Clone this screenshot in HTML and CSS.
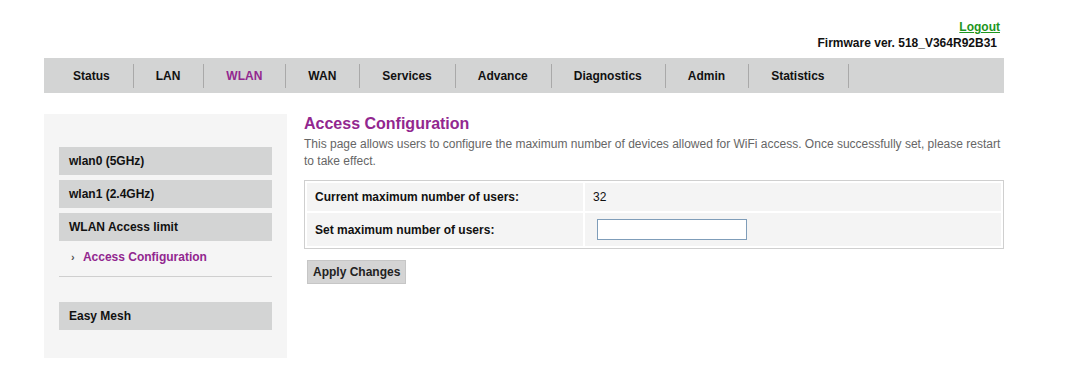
FILE: index.html
```html
<!DOCTYPE html>
<html>
<head>
    <title>WLAN Access Configuration</title>
    <link rel="stylesheet" href="styles.css">
</head>
<body>

<div class="page">
    <div class="top">
        <a class="logout" href="#">Logout</a>
        <div class="firmware">Firmware ver. 518_V364R92B31</div>
    </div>

    <ul class="nav">
        <li>Status</li>
        <li>LAN</li>
        <li class="active">WLAN</li>
        <li>WAN</li>
        <li>Services</li>
        <li>Advance</li>
        <li>Diagnostics</li>
        <li>Admin</li>
        <li>Statistics</li>
    </ul>

    <div class="main">
        <div class="side">
            <div class="menu-item">wlan0 (5GHz)</div>
            <div class="menu-item">wlan1 (2.4GHz)</div>
            <div class="menu-item open">WLAN Access limit</div>
            <div class="sub-item">
                <span class="arrow">&rsaquo;</span>
                <a href="#">Access Configuration</a>
            </div>
            <div class="menu-item mesh">Easy Mesh</div>
        </div>

        <div class="content">
            <h1>Access Configuration</h1>
            <p class="desc">This page allows users to configure the maximum number of devices allowed for WiFi access. Once successfully set, please restart to take effect.</p>

            <table class="form-table">
                <tr>
                    <td class="label">Current maximum number of users:</td>
                    <td class="value">32</td>
                </tr>
                <tr class="input-row">
                    <td class="label">Set maximum number of users:</td>
                    <td class="value"><input type="text" id="maxUsers" name="maxUsers"></td>
                </tr>
            </table>

            <button class="apply">Apply Changes</button>
        </div>
    </div>
</div>

</body>
</html>
```

FILE: styles.css
```css
:root {
    --purple: #92278f;
    --gray-bar: #d3d4d4;
    --side-bg: #f5f5f5;
    --cell-bg: #f4f4f4;
    --line: #cfcfcf;
}

body {
    margin: 0;
    font-family: "Liberation Sans", Arial, sans-serif;
    font-size: 12px;
    color: #111;
    background-color: #ffffff;
}

.page {
    width: 960px;
    margin-left: 44px;
}

.top {
    padding-top: 19px;
    text-align: right;
    font-weight: bold;
    line-height: 16px;
}

.logout {
    display: inline-block;
    margin-right: 4px;
    color: #1e961e;
    text-decoration: underline;
}

.firmware {
    margin-right: 7px;
}

.nav {
    list-style: none;
    margin: 7px 0 0 0;
    padding: 0 0 0 7px;
    height: 35px;
    display: flex;
    align-items: center;
    background-color: var(--gray-bar);
}

.nav li {
    padding: 0 23px 0 22px;
    line-height: 24px;
    font-weight: bold;
    border-right: 1px solid #a9a9a9;
}

.nav li.active {
    color: var(--purple);
}

.main {
    display: flex;
    gap: 17px;
    margin-top: 21px;
}

.side {
    width: 243px;
    box-sizing: border-box;
    padding: 33px 15px 28px 15px;
    background-color: var(--side-bg);
    align-self: flex-start;
}

.menu-item {
    height: 28px;
    line-height: 28px;
    padding-left: 10px;
    margin-bottom: 5px;
    background-color: var(--gray-bar);
    font-weight: bold;
}

.menu-item.open {
    margin-bottom: 0;
}

.menu-item.mesh {
    margin: 25px 0 0 0;
}

.sub-item {
    padding: 9px 0 12px 12px;
    line-height: 14px;
    border-bottom: 1px solid var(--line);
    font-weight: bold;
}

.sub-item .arrow {
    display: inline-block;
    width: 9px;
    color: #555;
    font-size: 11px;
}

.sub-item a {
    color: var(--purple);
    text-decoration: none;
}

.content {
    width: 700px;
}

.content h1 {
    margin: 0;
    font-size: 16px;
    line-height: 20px;
    color: var(--purple);
}

.desc {
    margin: 2px 0 0 0;
    line-height: 17px;
    color: #666;
}

.form-table {
    width: 700px;
    margin-top: 10px;
    border: 1px solid var(--line);
    border-spacing: 2px;
}

.form-table td {
    background-color: var(--cell-bg);
    padding: 7px 6px 7px 8px;
    line-height: 14px;
}

.form-table td.label {
    width: 262px;
    font-weight: bold;
}

.form-table .input-row td {
    padding-top: 6px;
    padding-bottom: 6px;
}

.form-table input[type="text"] {
    width: 150px;
    height: 21px;
    box-sizing: border-box;
    margin: 0 0 0 4px;
    border: 1px solid #7f9db9;
    background-color: #fff;
    vertical-align: middle;
}

.apply {
    display: block;
    margin: 11px 0 0 3px;
    height: 24px;
    padding: 0 5px;
    font-family: "Liberation Sans", Arial, sans-serif;
    font-size: 12px;
    font-weight: bold;
    color: #222;
    background-color: #d4d4d4;
    border: 1px solid #c6c6c6;
    cursor: pointer;
}
```
